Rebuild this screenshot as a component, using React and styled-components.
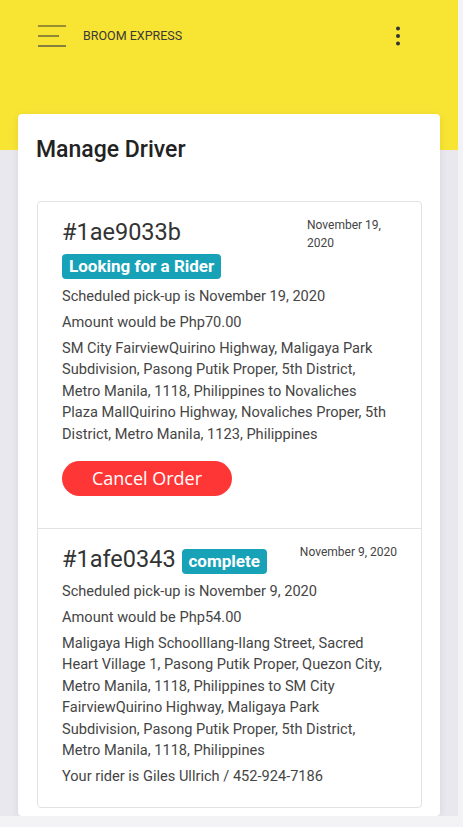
import React from "react";
import styled, { createGlobalStyle } from "styled-components";

const orders = [
  {
    id: "#1ae9033b",
    status: "Looking for a Rider",
    date: "November 19, 2020",
    dateWidth: "90px",
    pickup: "November 19, 2020",
    amount: "Php70.00",
    route:
      "SM City FairviewQuirino Highway, Maligaya Park Subdivision, Pasong Putik Proper, 5th District, Metro Manila, 1118, Philippines to Novaliches Plaza MallQuirino Highway, Novaliches Proper, 5th District, Metro Manila, 1123, Philippines",
    cancellable: true,
  },
  {
    id: "#1afe0343",
    status: "complete",
    date: "November 9, 2020",
    pickup: "November 9, 2020",
    amount: "Php54.00",
    route:
      "Maligaya High SchoolIlang-Ilang Street, Sacred Heart Village 1, Pasong Putik Proper, Quezon City, Metro Manila, 1118, Philippines to SM City FairviewQuirino Highway, Maligaya Park Subdivision, Pasong Putik Proper, 5th District, Metro Manila, 1118, Philippines",
    rider: "Giles Ullrich / 452-924-7186",
  },
];

function App() {
  return (
    <>
      <GlobalStyle />
      <Shell>
        <TopBar>
          <NavRow>
            <MenuButton aria-label="menu">
              <svg width="28" height="22" viewBox="0 0 28 22">
                <line x1="0" y1="1" x2="28" y2="1" stroke="#5a5530" strokeWidth="1.2" />
                <line x1="0" y1="11" x2="21" y2="11" stroke="#4a4a3a" strokeWidth="1.2" />
                <line x1="0" y1="21" x2="28" y2="21" stroke="#3a3d4a" strokeWidth="1.2" />
              </svg>
            </MenuButton>
            <Brand>BROOM EXPRESS</Brand>
            <MoreButton aria-label="more">
              <svg width="6" height="20" viewBox="0 0 6 20">
                <circle cx="3" cy="2.5" r="2" fill="#333" />
                <circle cx="3" cy="10" r="2" fill="#333" />
                <circle cx="3" cy="17.5" r="2" fill="#333" />
              </svg>
            </MoreButton>
          </NavRow>
        </TopBar>
        <Panel>
          <PageTitle>Manage Driver</PageTitle>
          <OrderList>
            {orders.map((order) => (
              <OrderItem key={order.id}>
                <OrderHead>
                  <OrderTitle>
                    {order.id} <Badge>{order.status}</Badge>
                  </OrderTitle>
                  <OrderDate $width={order.dateWidth}>{order.date}</OrderDate>
                </OrderHead>
                <Line>Scheduled pick-up is {order.pickup}</Line>
                <Line>Amount would be {order.amount}</Line>
                <Line>{order.route}</Line>
                {order.rider && <Line>Your rider is {order.rider}</Line>}
                {order.cancellable && <CancelButton>Cancel Order</CancelButton>}
              </OrderItem>
            ))}
          </OrderList>
        </Panel>
      </Shell>
    </>
  );
}

export default App;

const GlobalStyle = createGlobalStyle`
  body {
    margin: 0;
    background: #f3f3f5;
    font-family: Roboto, "Liberation Sans", sans-serif;
    color: #444;
  }
`;

const Shell = styled.div`
  width: 458px;
  background: #e8e8ee;
`;

const TopBar = styled.header`
  height: 150px;
  background: #f8e433;
`;

const NavRow = styled.div`
  height: 71px;
  display: flex;
  align-items: center;
  padding: 0 57px 0 38px;
`;

const MenuButton = styled.div`
  display: flex;
  margin-right: 17px;
  margin-top: 1px;
`;

const Brand = styled.div`
  flex: 1;
  font-size: 12.5px;
  color: #3a3a3a;
`;

const MoreButton = styled.div`
  display: flex;
`;

const Panel = styled.main`
  margin: -36px 18px 0;
  position: relative;
  background: #fff;
  border-radius: 4px;
  box-shadow: 0 2px 8px rgba(0, 0, 0, 0.08);
  padding: 22px 18px 8px;
`;

const PageTitle = styled.h1`
  margin: 0 0 37px;
  font-size: 23px;
  font-weight: 500;
  line-height: 1.2;
  color: #222;
`;

const OrderList = styled.div`
  border: 1px solid #e2e2e4;
  border-radius: 4px;
  margin-left: 1px;
`;

const OrderItem = styled.div`
  padding: 14px 24px 15px;
  & + & {
    border-top: 1px solid #e2e2e4;
  }
`;

const OrderHead = styled.div`
  display: flex;
  align-items: flex-start;
  justify-content: space-between;
  margin-bottom: 6px;
`;

const OrderTitle = styled.div`
  font-size: 23.5px;
  line-height: 32px;
  color: #333;
`;

const Badge = styled.span`
  display: inline-block;
  font-size: 17px;
  font-weight: 700;
  line-height: 1;
  padding: 4px 7px;
  border-radius: 4px;
  background: #17a2b8;
  color: #fff;
`;

const OrderDate = styled.div`
  flex: none;
  width: ${(p) => p.$width || "auto"};
  white-space: ${(p) => (p.$width ? "normal" : "nowrap")};
  font-size: 12px;
  line-height: 18px;
  color: #444;
`;

const Line = styled.p`
  margin: 0 0 4.4px;
  padding-right: 6px;
  font-size: 14.6px;
  line-height: 21.6px;
  color: #454545;
`;

const CancelButton = styled.button`
  display: block;
  width: 170px;
  height: 35px;
  margin: 15px 0 17px;
  border: none;
  border-radius: 18px;
  background: #ff3636;
  color: #fff;
  font-family: "Open Sans", sans-serif;
  font-size: 18px;
  cursor: pointer;
`;
